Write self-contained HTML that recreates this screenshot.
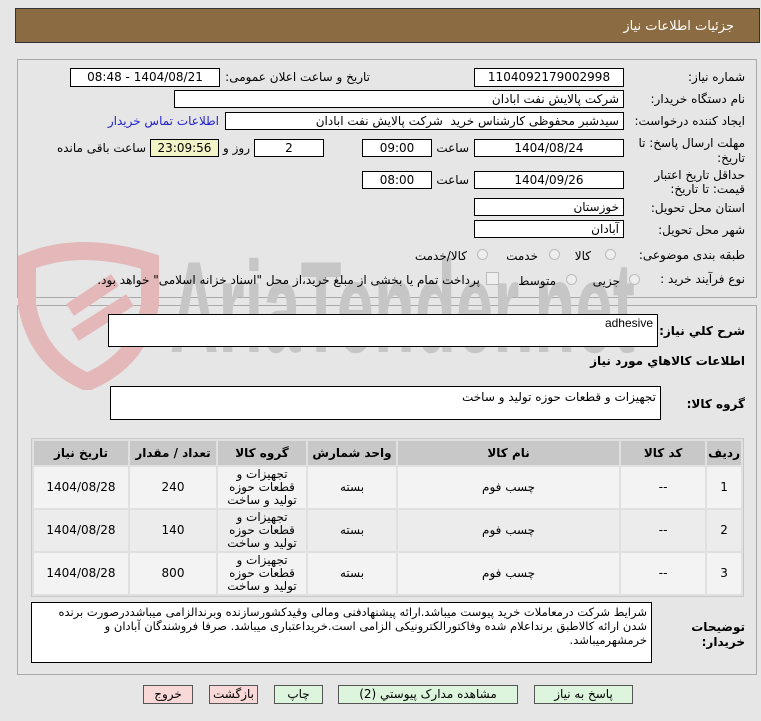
<!DOCTYPE html>
<html><head><meta charset="utf-8"><style>
body{margin:0;width:761px;height:721px;background:#e6e6e6;font-family:"DejaVu Sans","Liberation Sans",sans-serif;font-size:12px;color:#000;position:relative;overflow:hidden}
.a{position:absolute;white-space:nowrap}
.box{position:absolute;background:#fff;border:1px solid #000;box-sizing:border-box;direction:rtl;padding:0 4px;line-height:16px;font-size:12px}
.c{text-align:center}
.l{position:absolute;direction:rtl;text-align:right;white-space:nowrap}
.b{font-weight:bold}
.r{position:absolute;width:11px;height:11px;border-radius:50%;border:1px solid #bbb;background:#eee;box-sizing:border-box}
table{border-collapse:separate;border-spacing:2px;position:absolute;left:31px;top:438px;width:713px;background:#e0e0e0;border:1px solid #c8c8c8;direction:rtl}
td,th{text-align:center;font-size:12px}
th{background:#c8c8c8;height:22px;font-weight:bold}
td{background:#f3f3f3;height:39px;line-height:13px}
td.gr{padding:0 6px}
tr.e td{background:#ececec}
.btn{position:absolute;top:685px;height:19px;border:1px solid #555;box-sizing:border-box;text-align:center;line-height:17px;font-size:12px}
.g{background:#dcf5dc}.p{background:#f9d8d8}
</style></head><body>
<div class="a" style="left:15px;top:8px;width:745px;height:35px;background:#8b6b41;border:1px solid #333;box-sizing:border-box"></div>
<div class="l" style="right:27px;top:19px;color:#fff;font-size:13px">جزئیات اطلاعات نیاز</div>
<div class="a" style="left:17px;top:59px;width:740px;height:239px;border:1px solid #aaa;box-sizing:border-box"></div>
<div class="a" style="left:17px;top:305px;width:740px;height:370px;border:1px solid #aaa;box-sizing:border-box"></div>
<svg class="a" style="left:15px;top:240px" width="640" height="150"><path d="M12 22 Q65 0 135 22 L135 65 Q125 120 72 142 Q22 120 12 65 Z" fill="none" stroke="#e4b8b8" stroke-width="18"/><path d="M55 70 L100 40 M60 95 L115 60" stroke="#e4b8b8" stroke-width="14"/><text x="155" y="112" font-family="Liberation Sans" font-weight="bold" font-size="130" fill="#c6c6c6" textLength="465" lengthAdjust="spacingAndGlyphs">AriaTender.net</text></svg>

<div class="l" style="right:16px;top:70px">شماره نیاز:</div>
<div class="box c" style="left:474px;top:68px;width:150px;height:19px">1104092179002998</div>
<div class="l" style="right:391px;top:70px">تاریخ و ساعت اعلان عمومی:</div>
<div class="box c" style="left:70px;top:68px;width:150px;height:19px">1404/08/21 - 08:48</div>

<div class="l" style="right:16px;top:92px">نام دستگاه خریدار:</div>
<div class="box" style="left:174px;top:90px;width:450px;height:18px">شرکت پالایش نفت ابادان</div>

<div class="l" style="right:16px;top:114px">ایجاد کننده درخواست:</div>
<div class="box" style="left:225px;top:112px;width:399px;height:18px">سیدشبر محفوظی کارشناس خرید &nbsp;شرکت پالایش نفت ابادان</div>
<div class="l" style="right:542px;top:114px;color:#2222cc">اطلاعات تماس خریدار</div>

<div class="l" style="right:16px;top:136px">مهلت ارسال پاسخ: تا</div>
<div class="l" style="right:16px;top:151px">تاریخ:</div>
<div class="box c" style="left:474px;top:139px;width:150px;height:18px">1404/08/24</div>
<div class="l" style="right:292px;top:141px">ساعت</div>
<div class="box c" style="left:362px;top:139px;width:70px;height:18px">09:00</div>
<div class="box c" style="left:254px;top:139px;width:70px;height:18px">2</div>
<div class="l" style="right:511px;top:141px">روز و</div>
<div class="box c" style="left:150px;top:139px;width:69px;height:18px;background:#f3f3c8">23:09:56</div>
<div class="l" style="right:615px;top:141px">ساعت باقی مانده</div>

<div class="l" style="right:16px;top:168px">حداقل تاریخ اعتبار</div>
<div class="l" style="right:16px;top:182px">قیمت: تا تاریخ:</div>
<div class="box c" style="left:474px;top:171px;width:150px;height:18px">1404/09/26</div>
<div class="l" style="right:292px;top:173px">ساعت</div>
<div class="box c" style="left:362px;top:171px;width:70px;height:18px">08:00</div>

<div class="l" style="right:16px;top:201px">استان محل تحویل:</div>
<div class="box" style="left:474px;top:198px;width:150px;height:18px">خوزستان</div>
<div class="l" style="right:16px;top:223px">شهر محل تحویل:</div>
<div class="box" style="left:474px;top:220px;width:150px;height:18px">آبادان</div>

<div class="l" style="right:16px;top:248px">طبقه بندی موضوعی:</div>
<div class="r" style="left:605px;top:249px"></div><div class="l" style="right:170px;top:249px">کالا</div>
<div class="r" style="left:549px;top:249px"></div><div class="l" style="right:223px;top:249px">خدمت</div>
<div class="r" style="left:477px;top:249px"></div><div class="l" style="right:294px;top:249px">کالا/خدمت</div>

<div class="l" style="right:16px;top:272px">نوع فرآیند خرید :</div>
<div class="r" style="left:629px;top:274px"></div><div class="l" style="right:141px;top:274px">جزیی</div>
<div class="r" style="left:566px;top:274px"></div><div class="l" style="right:205px;top:274px">متوسط</div>
<div class="a" style="left:486px;top:272px;width:11px;height:11px;border:1px solid #bbb;background:#eee"></div>
<div class="l" style="right:281px;top:273px">پرداخت تمام یا بخشی از مبلغ خرید،از محل "اسناد خزانه اسلامی" خواهد بود.</div>

<div class="l b" style="right:16px;top:324px">شرح کلي نیاز:</div>
<div class="box" style="left:108px;top:314px;width:550px;height:33px;font-family:'Liberation Sans'">adhesive</div>
<div class="l b" style="right:16px;top:354px">اطلاعات کالاهاي مورد نیاز</div>
<div class="l b" style="right:16px;top:397px">گروه کالا:</div>
<div class="box" style="left:110px;top:386px;width:551px;height:34px;padding-top:2px">تجهیزات و قطعات حوزه تولید و ساخت</div>

<table>
<tr><th style="width:25px">ردیف</th><th style="width:82px">کد کالا</th><th>نام کالا</th><th style="width:86px">واحد شمارش</th><th style="width:86px">گروه کالا</th><th style="width:84px">تعداد / مقدار</th><th style="width:92px">تاریخ نیاز</th></tr>
<tr><td>1</td><td>--</td><td>چسب فوم</td><td>بسته</td><td class="gr">تجهیزات و قطعات حوزه تولید و ساخت</td><td>240</td><td>1404/08/28</td></tr>
<tr class="e"><td>2</td><td>--</td><td>چسب فوم</td><td>بسته</td><td class="gr">تجهیزات و قطعات حوزه تولید و ساخت</td><td>140</td><td>1404/08/28</td></tr>
<tr><td>3</td><td>--</td><td>چسب فوم</td><td>بسته</td><td class="gr">تجهیزات و قطعات حوزه تولید و ساخت</td><td>800</td><td>1404/08/28</td></tr>
</table>

<div class="l b" style="right:16px;top:620px">توضیحات</div>
<div class="l b" style="right:16px;top:635px">خریدار:</div>
<div class="box" style="left:31px;top:602px;width:621px;height:61px;white-space:normal;line-height:14px;font-size:11.5px;padding-top:2px">شرایط شرکت درمعاملات خرید پیوست میباشد.ارائه پیشنهادفنی ومالی وقیدکشورسازنده وبرندالزامی میباشددرصورت برنده شدن ارائه کالاطبق برنداعلام شده وفاکتورالکترونیکی الزامی است.خریداعتباری میباشد. صرفا فروشندگان آبادان و خرمشهرمیباشد.</div>

<div class="btn g" style="left:534px;width:99px">پاسخ به نیاز</div>
<div class="btn g" style="left:338px;width:180px">مشاهده مدارک پیوستي (2)</div>
<div class="btn g" style="left:274px;width:49px">چاپ</div>
<div class="btn p" style="left:209px;width:49px">بازگشت</div>
<div class="btn p" style="left:143px;width:50px">خروج</div>
</body></html>
